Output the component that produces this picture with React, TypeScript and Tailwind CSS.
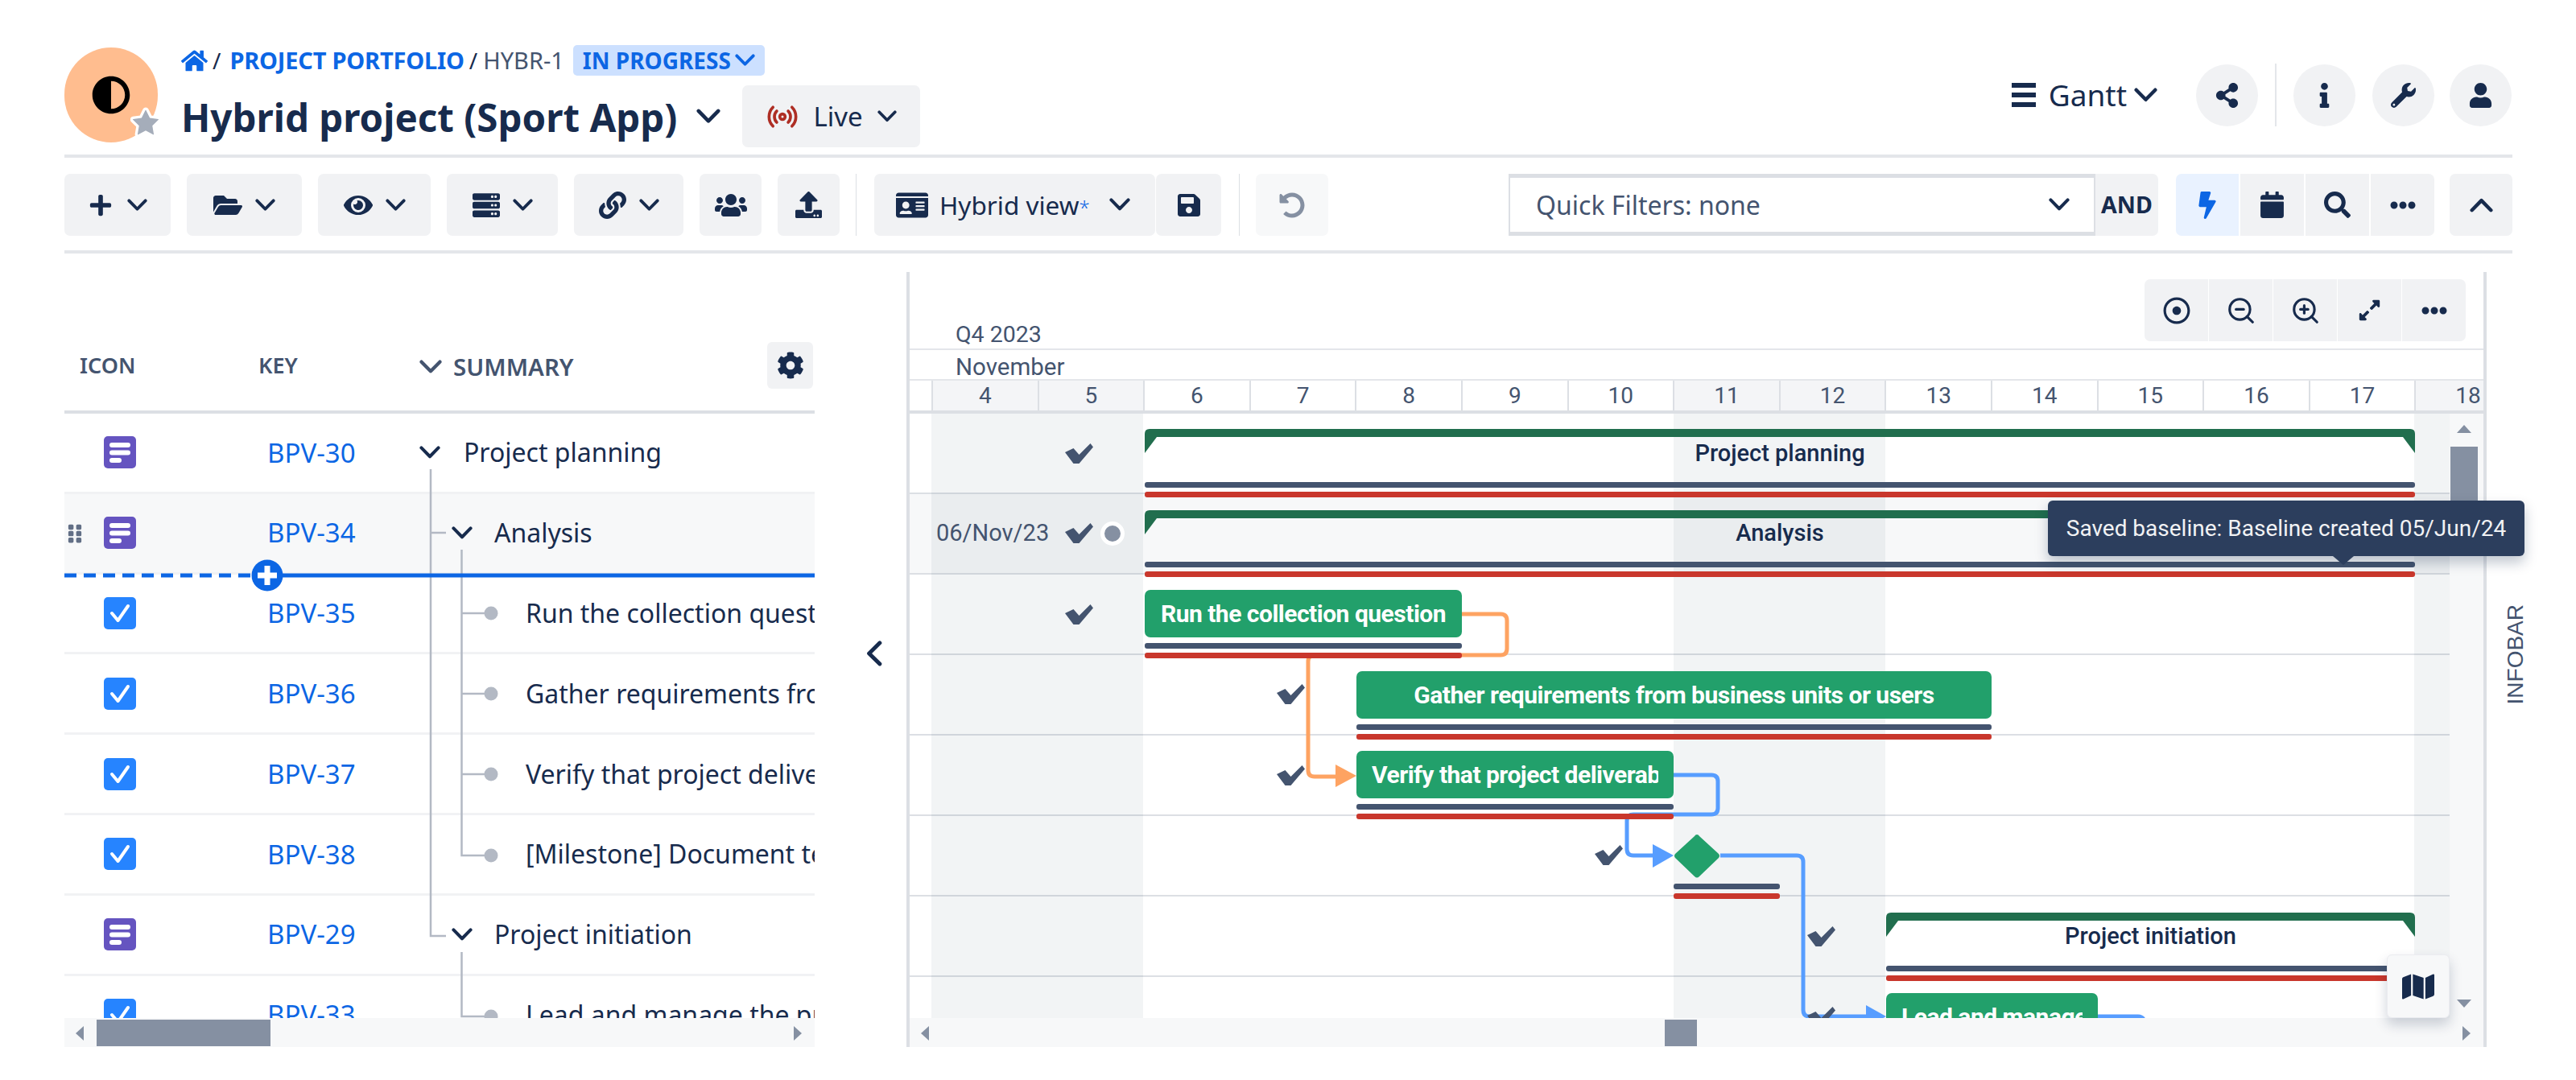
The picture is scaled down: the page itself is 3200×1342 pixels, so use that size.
import { Radio, ZoomIn, ZoomOut } from 'lucide-react'
import {
  FaAdjust, FaBolt, FaCalendar, FaCog, FaEllipsisH, FaExpandAlt, FaEye, FaFolderOpen,
  FaGripVertical, FaHome, FaIdCard, FaInfo, FaLink, FaMap, FaPlus, FaRegDotCircle, FaSave, FaSearch,
  FaServer, FaShareAlt, FaStar, FaUndoAlt, FaUpload, FaUser, FaUsers, FaWrench,
} from 'react-icons/fa'

const ink = '#172B4D'

function Chev({ w = 25, up = false, left = false, color = ink }: { w?: number; up?: boolean; left?: boolean; color?: string }) {
  const rot = up ? 'rotate-180' : left ? 'rotate-90' : ''
  return (
    <svg width={w} height={w * 0.62} viewBox="0 0 13 8" className={`shrink-0 ${rot}`}>
      <path d="M1.2 1.2 L6.5 6.6 L11.8 1.2" fill="none" stroke={color} strokeWidth="2" strokeLinecap="round" strokeLinejoin="round" />
    </svg>
  )
}

function ToolBtn({ className, children }: { className: string; children: React.ReactNode }) {
  return <div className={`h-[77px] shrink-0 rounded-[7px] flex items-center justify-center text-[#172B4D] ${className}`}>{children}</div>
}

function RoundBtn({ children }: { children: React.ReactNode }) {
  return <div className="w-[77px] h-[77px] rounded-full bg-[#F1F2F4] flex items-center justify-center text-[#172B4D]">{children}</div>
}

const rows = [
  { icon: 'story', key: 'BPV-30', level: 0, text: 'Project planning' },
  { icon: 'story', key: 'BPV-34', level: 1, text: 'Analysis', active: true },
  { icon: 'task', key: 'BPV-35', level: 2, text: 'Run the collection question' },
  { icon: 'task', key: 'BPV-36', level: 2, text: 'Gather requirements from business units or users' },
  { icon: 'task', key: 'BPV-37', level: 2, text: 'Verify that project deliverables meet requirements' },
  { icon: 'task', key: 'BPV-38', level: 2, text: '[Milestone] Document team decisions' },
  { icon: 'story', key: 'BPV-29', level: 1, text: 'Project initiation' },
  { icon: 'task', key: 'BPV-33', level: 2, text: 'Lead and manage the project' },
]

function IssueIcon({ type }: { type: string }) {
  if (type === 'story') {
    return (
      <svg width="40" height="40" viewBox="0 0 40 40" className="shrink-0">
        <rect width="40" height="40" rx="5" fill="#6554C0" />
        <rect x="7" y="8" width="26" height="6" rx="3" fill="#fff" />
        <rect x="7" y="17.5" width="26" height="6" rx="3" fill="#fff" />
        <rect x="7" y="27" width="15" height="6" rx="3" fill="#fff" />
      </svg>
    )
  }
  return (
    <svg width="40" height="40" viewBox="0 0 40 40" className="shrink-0">
      <rect width="40" height="40" rx="5" fill="#2684FF" />
      <path d="M10 20 L17.5 29 L30 11" fill="none" stroke="#fff" strokeWidth="4" strokeLinecap="round" strokeLinejoin="round" />
    </svg>
  )
}

function TableRow({ row }: { row: (typeof rows)[number] }) {
  const indent = row.level === 1 ? 'pl-[40px]' : row.level === 2 ? 'pl-[132px]' : ''
  return (
    <div className={`h-[99.8px] shrink-0 flex items-center border-b-[3px] border-[#F1F2F4] relative ${row.active ? 'bg-[#F7F8F9]' : ''}`}>
      {row.active && <FaGripVertical className="absolute left-[0px] top-[36px] text-[#626F86]" size={26} />}
      <div className="w-[252px] pl-[49px] shrink-0"><IssueIcon type={row.icon} /></div>
      <div className="w-[189px] shrink-0 text-[#0C66E4] text-[33px]">{row.key}</div>
      <div className={`flex-1 min-w-0 overflow-hidden flex items-center whitespace-nowrap ${indent} text-[32px] text-[#172B4D]`}>
        {row.level < 2 && <span className={row.level === 0 ? 'mr-[29px]' : 'mr-[27px]'}><Chev w={26} /></span>}
        {row.text}
      </div>
    </div>
  )
}

function TableTree() {
  const stroke = '#B3B9C4'
  return (
    <svg width="932" height="751" className="absolute inset-0 pointer-events-none">
      <path d="M455 69 V649 H474 M455 148 H474" fill="none" stroke={stroke} strokeWidth="2.5" />
      <path d="M493.5 169 V549 H522 M493.5 248 H522 M493.5 348 H522 M493.5 448 H522" fill="none" stroke={stroke} strokeWidth="2.5" />
      <path d="M493.5 669 V749 H522" fill="none" stroke={stroke} strokeWidth="2.5" />
      {[248, 348, 448, 549, 749].map((y) => <circle key={y} cx="530" cy={y} r="8.5" fill={stroke} />)}
      <path d="M0 201 H235" stroke="#0C66E4" strokeWidth="5" strokeDasharray="15 9" />
      <path d="M270 201 H932" stroke="#0C66E4" strokeWidth="5" />
      <circle cx="252" cy="201" r="19.5" fill="#0C66E4" />
      <path d="M252 189 V213 M240 201 H264" stroke="#fff" strokeWidth="7" />
    </svg>
  )
}

function HScroll({ thumb }: { thumb: string }) {
  return (
    <div className="h-[36px] bg-[#F7F8F9] relative">
      <div className="absolute left-[14px] top-[10px] w-0 h-0 border-y-[9px] border-y-transparent border-r-[10px] border-r-[#8590A2]" />
      <div className={`absolute top-[2px] h-[33px] bg-[#8590A2] ${thumb}`} />
      <div className="absolute right-[16px] top-[10px] w-0 h-0 border-y-[9px] border-y-transparent border-l-[10px] border-l-[#8590A2]" />
    </div>
  )
}

const days = [4, 5, 6, 7, 8, 9, 10, 11, 12, 13, 14, 15, 16, 17, 18]
const weekend = [4, 5, 11, 12, 18]

const groups = [
  { x: 292, y: 19, w: 1578, label: 'Project planning', ly: 49 },
  { x: 292, y: 120, w: 1578, label: 'Analysis', ly: 148 },
  { x: 1213, y: 620, w: 657, label: 'Project initiation', ly: 649 },
]

const tasks = [
  { x: 292, y: 219, w: 394, h: 59, label: 'Run the collection question' },
  { x: 555, y: 320, w: 789, h: 59, label: 'Gather requirements from business units or users' },
  { x: 555, y: 419, w: 394, h: 59, label: 'Verify that project deliverables' },
  { x: 1213, y: 720, w: 263, h: 59, label: 'Lead and manage the project' },
]

const baselines = [
  { x: 292, w: 1578, y: 85 },
  { x: 292, w: 1578, y: 184 },
  { x: 292, w: 394, y: 285 },
  { x: 555, w: 789, y: 386 },
  { x: 555, w: 394, y: 485 },
  { x: 949, w: 132, y: 584 },
  { x: 1213, w: 657, y: 686 },
]

const checks = [
  { x: 193, y: 49 }, { x: 193, y: 148 }, { x: 193, y: 249 }, { x: 456, y: 348 }, { x: 456, y: 449 },
  { x: 851, y: 548 }, { x: 1115, y: 649 }, { x: 1115, y: 749 },
]

function GanttBars() {
  return (
    <>
      <svg width="1913" height="751" className="absolute inset-0">
        <g fill="none" strokeWidth="5" strokeLinejoin="round">
          <path d="M686 249 H734 Q742 249 742 257 V292 Q742 300 734 300 H503 Q495 300 495 308 V443 Q495 451 503 451 H532" stroke="#FEA362" />
          <path d="M949 449 H996 Q1004 449 1004 457 V490 Q1004 498 996 498 H899 Q891 498 891 506 V541 Q891 549 899 549 H926" stroke="#579DFF" />
          <path d="M1007 549 H1102 Q1110 549 1110 557 V741 Q1110 749 1118 749 H1190" stroke="#579DFF" />
          <path d="M1476 749 H1526 Q1532 749 1534 755" stroke="#579DFF" />
        </g>
        <path d="M529 436 L555 450 L529 464 Z" fill="#FEA362" />
        <path d="M923 535 L949 549 L923 564 Z" fill="#579DFF" />
        <path d="M1188 735 L1213 749 L1188 763 Z" fill="#579DFF" />
        <path d="M978 523 Q980 523 981 525 L1005 547 Q1007 549.5 1005 552 L981 575 Q978 578 975 575 L951 552 Q949 549.5 951 547 L975 525 Q976 523 978 523 Z" fill="#22A06B" />
      </svg>
      {groups.map((g) => (
        <div key={g.label} className="absolute" style={{ left: g.x, top: g.y, width: g.w }}>
          <svg width={g.w} height="31" viewBox={`0 0 ${g.w} 31`} className="block">
            <path d={`M6 0 H${g.w - 6} Q${g.w} 0 ${g.w} 6 V30 L${g.w - 15} 10 H15 L0 30 V6 Q0 0 6 0 Z`} fill="#216E4E" />
          </svg>
          <div className="absolute w-full text-center text-[29px] leading-[36px] text-[#172B4D] font-medium" style={{ top: g.ly - g.y - 18 }}>{g.label}</div>
        </div>
      ))}
      {tasks.map((t) => (
        <div key={t.label} className="absolute bg-[#22A06B] rounded-[7px] px-[19px] text-white text-[30px] font-bold tracking-[-0.5px] flex items-center" style={{ left: t.x, top: t.y, width: t.w, height: t.h }}>
          <div className="w-full overflow-hidden whitespace-nowrap text-center">{t.label}</div>
        </div>
      ))}
      {baselines.map((b) => (
        <div key={b.y} style={{ left: b.x, top: b.y, width: b.w }} className="absolute">
          <div className="h-[7px] bg-[#44546F] rounded-[3px]" />
          <div className="h-[7px] mt-[5px] bg-[#C9372C] rounded-[3px]" />
        </div>
      ))}
      {checks.map((c) => (
        <svg key={`${c.x}-${c.y}`} width="35" height="25" viewBox="0 0 35 25" className="absolute" style={{ left: c.x, top: c.y - 12 }}>
          <path d="M0 11 L10.5 6 L17.5 14 L31.5 0 L35 4.5 L17.5 25 L10.5 25 Z" fill="#44546F" />
        </svg>
      ))}
      <div className="absolute left-[33px] top-[130px] h-[36px] leading-[36px] text-[29px] text-[#44546F]">06/Nov/23</div>
      <div className="absolute left-[237px] top-[134px] w-[30px] h-[30px] rounded-full bg-[#8590A2] border-[5px] border-white" />
    </>
  )
}

export default function App() {
  return (
    <div className="w-[3200px] h-[1342px] bg-white overflow-hidden pl-[80px] font-['Noto_Sans',sans-serif] text-[#172B4D]">
      <div className="w-[3041px] h-[196px] flex items-start justify-between border-b-[4px] border-[#E4E6EA]">
        <div className="flex pt-[56px]">
          <div className="relative w-[116px] h-[118px] mt-[3px] rounded-full bg-[#FFBD8F] flex items-center justify-center">
            <FaAdjust size={48} className="text-black" />
            <FaStar size={38} className="absolute right-[-4px] bottom-[6px] text-[#A5ADBA] stroke-white stroke-[50px]" />
          </div>
          <div className="ml-[29px]">
            <div className="flex items-center h-[38px] text-[28px] whitespace-nowrap">
              <FaHome size={33} className="text-[#0C66E4]" />
              <span className="ml-[6px]">/</span>
              <span className="ml-[11px] font-bold text-[#0C66E4] text-[29px] tracking-[-0.2px]">PROJECT PORTFOLIO</span>
              <span className="ml-[6px]">/</span>
              <span className="ml-[7px] text-[#44546F] text-[29px]">HYBR-1</span>
              <span className="ml-[11px] h-[38px] w-[238px] rounded-[5px] bg-[#CCE0FF] text-[#0C66E4] font-bold flex items-center justify-center gap-[5px]">IN PROGRESS<Chev w={25} color="#0C66E4" /></span>
            </div>
            <div className="flex items-center mt-[11px]">
              <div className="text-[47.5px] leading-[77px] pt-[2px] font-bold whitespace-nowrap">Hybrid project (Sport App)</div>
              <span className="ml-[24px]"><Chev w={30} /></span>
              <ToolBtn className="w-[221px] ml-[27px] gap-[18px] text-[33px] bg-[#F1F2F4]">
                <Radio size={40} className="text-[#AE2E24]" strokeWidth={2.2} />
                <span>Live</span>
                <Chev w={24} />
              </ToolBtn>
            </div>
          </div>
        </div>
        <div className="flex items-center pt-[79px] pr-[1px]">
          <svg width="30" height="30" viewBox="0 0 30 30" className="mr-[16px]">
            <path d="M0 0 H30 V6 H0 Z M0 12 H30 V18 H0 Z M0 24 H30 V30 H0 Z" fill={ink} />
          </svg>
          <span className="text-[37px]">Gantt</span>
          <span className="ml-[9px] mr-[48px]"><Chev w={29} /></span>
          <RoundBtn><FaShareAlt size={31} /></RoundBtn>
          <div className="w-[2px] h-[78px] bg-[#E4E6EA] mx-[21px]" />
          <RoundBtn><FaInfo size={31} /></RoundBtn>
          <div className="w-[21px]" />
          <RoundBtn><FaWrench size={31} /></RoundBtn>
          <div className="w-[19px]" />
          <RoundBtn><FaUser size={31} /></RoundBtn>
        </div>
      </div>

      <div className="w-[3041px] h-[119px] pt-[20px] flex gap-[20px] border-b-[4px] border-[#E4E6EA]">
        <ToolBtn className="w-[132px] gap-[18px] bg-[#F1F2F4]"><FaPlus size={30} /><Chev /></ToolBtn>
        <ToolBtn className="w-[143px] gap-[16px] bg-[#F1F2F4]"><FaFolderOpen size={36} /><Chev /></ToolBtn>
        <ToolBtn className="w-[140px] gap-[16px] bg-[#F1F2F4]"><FaEye size={36} /><Chev /></ToolBtn>
        <ToolBtn className="w-[138px] gap-[16px] bg-[#F1F2F4]"><FaServer size={34} /><Chev /></ToolBtn>
        <ToolBtn className="w-[136px] gap-[16px] bg-[#F1F2F4]"><FaLink size={34} /><Chev /></ToolBtn>
        <ToolBtn className="w-[77px] bg-[#F1F2F4]"><FaUsers size={40} /></ToolBtn>
        <ToolBtn className="w-[77px] bg-[#F1F2F4]"><FaUpload size={33} /></ToolBtn>
        <div className="w-[2px] h-[77px] bg-[#DCDFE4]" />
        <ToolBtn className="w-[349px] gap-[14px] text-[31.5px] ml-[2px] justify-start pl-[27px] bg-[#F1F2F4]">
          <FaIdCard size={40} />
          <span>Hybrid view<span className="text-[#0C66E4] text-[24px] font-light">*</span></span>
          <span className="ml-[10px]"><Chev w={26} /></span>
        </ToolBtn>
        <ToolBtn className="w-[81px] ml-[-19px] bg-[#F1F2F4]"><FaSave size={32} /></ToolBtn>
        <div className="w-[2px] h-[77px] bg-[#DCDFE4] ml-[2px]" />
        <ToolBtn className="w-[90px] bg-[#F7F8F9]"><FaUndoAlt size={32} className="text-[#8590A2]" /></ToolBtn>
        <div className="ml-[204px] w-[729px] h-[77px] shrink-0 border-[2px] border-y-[5px] border-[#DCDFE4] flex items-center justify-between pl-[32px] pr-[30px] text-[32px] text-[#44546F]">
          <span>Quick Filters: none</span>
          <Chev w={26} />
        </div>
        <ToolBtn className="w-[78px] ml-[-20px] rounded-l-none text-[28.5px] font-bold bg-[#F1F2F4]">AND</ToolBtn>
        <div className="flex gap-[2px] ml-[2px]">
          <ToolBtn className="w-[78px] rounded-r-none bg-[#E9F2FF]"><FaBolt size={34} className="text-[#0C66E4]" /></ToolBtn>
          <ToolBtn className="w-[79px] rounded-none bg-[#F1F2F4]"><FaCalendar size={33} /></ToolBtn>
          <ToolBtn className="w-[79px] rounded-none bg-[#F1F2F4]"><FaSearch size={33} /></ToolBtn>
          <ToolBtn className="w-[79px] rounded-l-none bg-[#F1F2F4]"><FaEllipsisH size={32} /></ToolBtn>
        </div>
        <ToolBtn className="w-[78px] ml-[-1px] bg-[#F1F2F4]"><Chev w={29} up /></ToolBtn>
      </div>

      <div className="flex items-start">
        <div className="w-[932px] shrink-0">
          <div className="h-[199px] flex items-end border-b-[4px] border-[#DCDFE4] pb-[36px] relative text-[27px] font-semibold text-[#44546F]">
            <div className="w-[241px] pl-[19px]">ICON</div>
            <div className="w-[200px]">KEY</div>
            <div className="h-[37px] flex items-center"><Chev w={28} color="#44546F" /></div>
            <div className="ml-[14px] text-[29.5px] leading-[37px]">SUMMARY</div>
            <div className="absolute right-[2px] top-[110px] w-[57px] h-[58px] rounded-[6px] bg-[#F1F2F4] flex items-center justify-center">
              <FaCog size={34} className="text-[#172B4D]" />
            </div>
          </div>
          <div className="h-[751px] overflow-hidden relative">
            {rows.map((r) => <TableRow key={r.key} row={r} />)}
            <TableTree />
          </div>
          <HScroll thumb="left-[40px] w-[216px]" />
        </div>

        <div className="w-[114px] h-[985px] flex items-center justify-center shrink-0 pl-[34px]">
          <div className="mt-[8px]"><Chev w={32} left /></div>
        </div>

        <div className="relative w-[1963px] shrink-0 mt-[23px] border-x-[4px] border-[#DCDFE4] font-['Roboto',sans-serif]">
          <div className="h-[97px] flex items-end pl-[57px] pb-[1px] border-b-[2px] border-[#E4E6EA] text-[28.5px] leading-[32px] text-[#44546F]">Q4 2023</div>
          <div className="h-[38px] flex items-center pl-[57px] pt-[5px] border-b-[2px] border-[#E4E6EA] text-[29.5px] leading-[32px] text-[#44546F]">November</div>
          <div className="h-[41px] flex border-b-[4px] border-[#DCDFE4] overflow-hidden pl-[27px] text-[28px] text-[#44546F]">
            {days.map((d) => (
              <div key={d} className={`w-[131.6px] shrink-0 border-l-[2px] border-[#DCDFE4] flex items-center justify-center ${weekend.includes(d) ? 'bg-[#F4F5F7]' : ''}`}>{d}</div>
            ))}
          </div>
          <div className="flex h-[751px]">
            <div className="w-[1913px] h-[751px] relative overflow-hidden">
              {[0, 1, 2, 3, 4, 5, 6, 7].map((i) => (
                <div key={i} className={`h-[100px] border-b-[2px] border-[#DCDFE4] ${i === 1 ? 'bg-[#F7F8F9]' : ''}`} />
              ))}
              <div className="absolute left-[27px] top-0 w-[263px] h-full bg-[#091E42]/[0.05]" />
              <div className="absolute left-[949px] top-0 w-[263px] h-full bg-[#091E42]/[0.05]" />
              <div className="absolute left-[1869px] top-0 w-[44px] h-full bg-[#091E42]/[0.05]" />
              <GanttBars />
            </div>
            <div className="flex-1 bg-[#F7F8F9] relative flex flex-col items-center pt-[14px] pr-[6px]">
              <div className="w-0 h-0 border-x-[9px] border-x-transparent border-b-[10px] border-b-[#8590A2]" />
              <div className="w-[34px] h-[110px] mt-[17px] bg-[#8590A2]" />
              <div className="absolute bottom-[13px] w-0 h-0 border-x-[9px] border-x-transparent border-t-[10px] border-t-[#8590A2]" />
            </div>
          </div>
          <HScroll thumb="left-[938px] w-[40px]" />

          <div className="absolute left-[1534px] top-[9px] flex gap-[1px] rounded-[7px] overflow-hidden">
            <ToolBtn className="w-[79px] rounded-none bg-[#F1F2F4]"><FaRegDotCircle size={34} /></ToolBtn>
            <ToolBtn className="w-[79px] rounded-none bg-[#F1F2F4]"><ZoomOut size={38} strokeWidth={2} /></ToolBtn>
            <ToolBtn className="w-[79px] rounded-none bg-[#F1F2F4]"><ZoomIn size={38} strokeWidth={2} /></ToolBtn>
            <ToolBtn className="w-[79px] rounded-none bg-[#F1F2F4]"><FaExpandAlt size={29} /></ToolBtn>
            <ToolBtn className="w-[79px] rounded-none bg-[#F1F2F4]"><FaEllipsisH size={32} /></ToolBtn>
          </div>

          <div className="absolute left-[1414px] top-[284px] w-[592px] h-[69px] rounded-[6px] bg-[#2C3E5D] text-[#F1F2F4] text-[28px] flex items-center justify-center whitespace-nowrap shadow-[0_8px_16px_rgba(9,30,66,0.25)]">
            Saved baseline: Baseline created 05/Jun/24
            <div className="absolute left-[354px] bottom-[-11px] w-0 h-0 border-x-[13px] border-x-transparent border-t-[11px] border-t-[#2C3E5D]" />
          </div>

          <div className="absolute left-[1835px] top-[848px] w-[78px] h-[79px] rounded-[6px] bg-[#F7F8F9] border border-[#EBECF0] shadow-[0_8px_16px_rgba(9,30,66,0.2)] flex items-center justify-center">
            <FaMap size={40} className="text-[#172B4D]" />
          </div>
        </div>

        <div className="w-[70px] flex justify-center pt-[436px] pl-[2px]">
          <div className="[writing-mode:vertical-rl] rotate-180 text-[28px] text-[#44546F] font-['Liberation_Sans',sans-serif] leading-none">INFOBAR</div>
        </div>
      </div>
    </div>
  )
}
